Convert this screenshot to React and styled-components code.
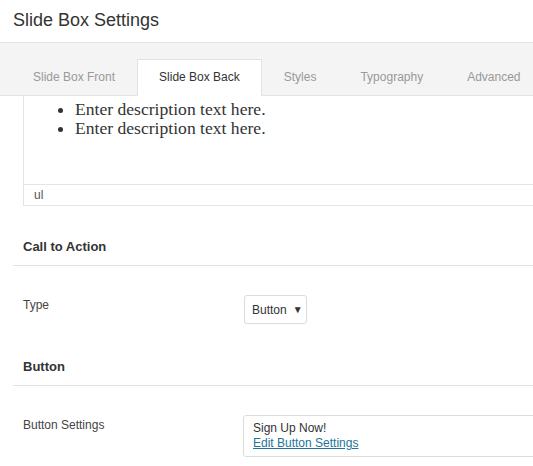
import React from 'react';
import styled, { createGlobalStyle } from 'styled-components';

const GlobalStyle = createGlobalStyle`
  html, body {
    margin: 0;
    padding: 0;
    background: #ffffff;
    overflow: hidden;
  }
  body {
    font-family: "Liberation Sans", Arial, sans-serif;
    color: #333;
  }
`;

const tabs = ['Slide Box Front', 'Slide Box Back', 'Styles', 'Typography', 'Advanced'];

const App = () => {
  return (
    <>
      <GlobalStyle />
      <Panel>
        <Header>
          <Title>Slide Box Settings</Title>
        </Header>

        <TabBar>
          {tabs.map((tab) => (
            <Tab key={tab} active={tab === 'Slide Box Back'}>
              {tab}
            </Tab>
          ))}
        </TabBar>

        <Body>
          <Editor>
            <EditorContent>
              <List>
                <li>Enter description text here.</li>
                <li>Enter description text here.</li>
              </List>
            </EditorContent>
            <StatusBar>ul</StatusBar>
          </Editor>

          <SectionTitle>Call to Action</SectionTitle>
          <Row>
            <Label>Type</Label>
            <Select>
              Button <Caret>▼</Caret>
            </Select>
          </Row>

          <SectionTitle>Button</SectionTitle>
          <Row>
            <Label>Button Settings</Label>
            <Preview>
              <div>Sign Up Now!</div>
              <EditLink href="#">Edit Button Settings</EditLink>
            </Preview>
          </Row>
        </Body>
      </Panel>
    </>
  );
};

export default App;

const Panel = styled.div`
  width: 580px;
`;

const Header = styled.div`
  height: 42px;
  padding-left: 13px;
  display: flex;
  align-items: center;
  border-bottom: 1px solid #e2e2e2;
  box-shadow: 0 1px 1px rgba(0, 0, 0, 0.04);
`;

const Title = styled.h1`
  margin: 0;
  font-size: 18px;
  font-weight: normal;
  color: #333;
  line-height: 20px;
  margin-top: -3px;
`;

const TabBar = styled.div`
  display: flex;
  align-items: flex-end;
  height: 52px;
  padding-left: 11px;
  background: #f4f4f4;
  border-bottom: 1px solid #e4e4e4;
`;

const Tab = styled.div`
  height: 36px;
  line-height: 34px;
  padding: 0 21px;
  font-size: 12px;
  color: ${(props) => (props.active ? '#333' : '#999')};
  background: ${(props) => (props.active ? '#fff' : 'transparent')};
  border: 1px solid ${(props) => (props.active ? '#e2e2e2' : 'transparent')};
  border-bottom: none;
  margin-bottom: -1px;
  white-space: nowrap;
`;

const Body = styled.div`
  padding-left: 13px;
`;

const Editor = styled.div`
  margin-left: 10px;
  border: 1px solid #e4e4e4;
  border-top: none;
`;

const EditorContent = styled.div`
  height: 88px;
`;

const List = styled.ul`
  margin: 0;
  padding: 4px 0 0 51px;
  font-family: "Liberation Serif", "Times New Roman", serif;
  font-size: 17.6px;
  line-height: 19px;
  color: #333;
`;

const StatusBar = styled.div`
  border-top: 1px solid #e4e4e4;
  height: 20px;
  line-height: 20px;
  padding-left: 10px;
  font-size: 12px;
  color: #555;
`;

const SectionTitle = styled.h3`
  margin: 31px 0 0;
  padding: 0 10px 8px;
  font-size: 13px;
  font-weight: bold;
  line-height: 20px;
  color: #333;
  border-bottom: 1px solid #e2e2e2;
`;

const Row = styled.div`
  display: flex;
  align-items: flex-start;
  padding: 29px 0 2px 10px;
`;

const Label = styled.div`
  width: 221px;
  flex-shrink: 0;
  font-size: 12px;
  line-height: 20px;
  color: #444;
`;

const Select = styled.div`
  box-sizing: border-box;
  width: 63px;
  height: 29px;
  padding-left: 7px;
  display: flex;
  align-items: center;
  gap: 6px;
  border: 1px solid #dcdcdc;
  border-radius: 3px;
  font-size: 12px;
  color: #333;
`;

const Caret = styled.span`
  font-size: 10px;
`;

const Preview = styled.div`
  flex: 1;
  margin-left: -1px;
  padding: 5px 9px;
  border: 1px solid #dcdcdc;
  border-radius: 3px;
  font-size: 12px;
  line-height: 15px;
  color: #333;
`;

const EditLink = styled.a`
  color: #21759b;
  text-decoration: underline;
`;
